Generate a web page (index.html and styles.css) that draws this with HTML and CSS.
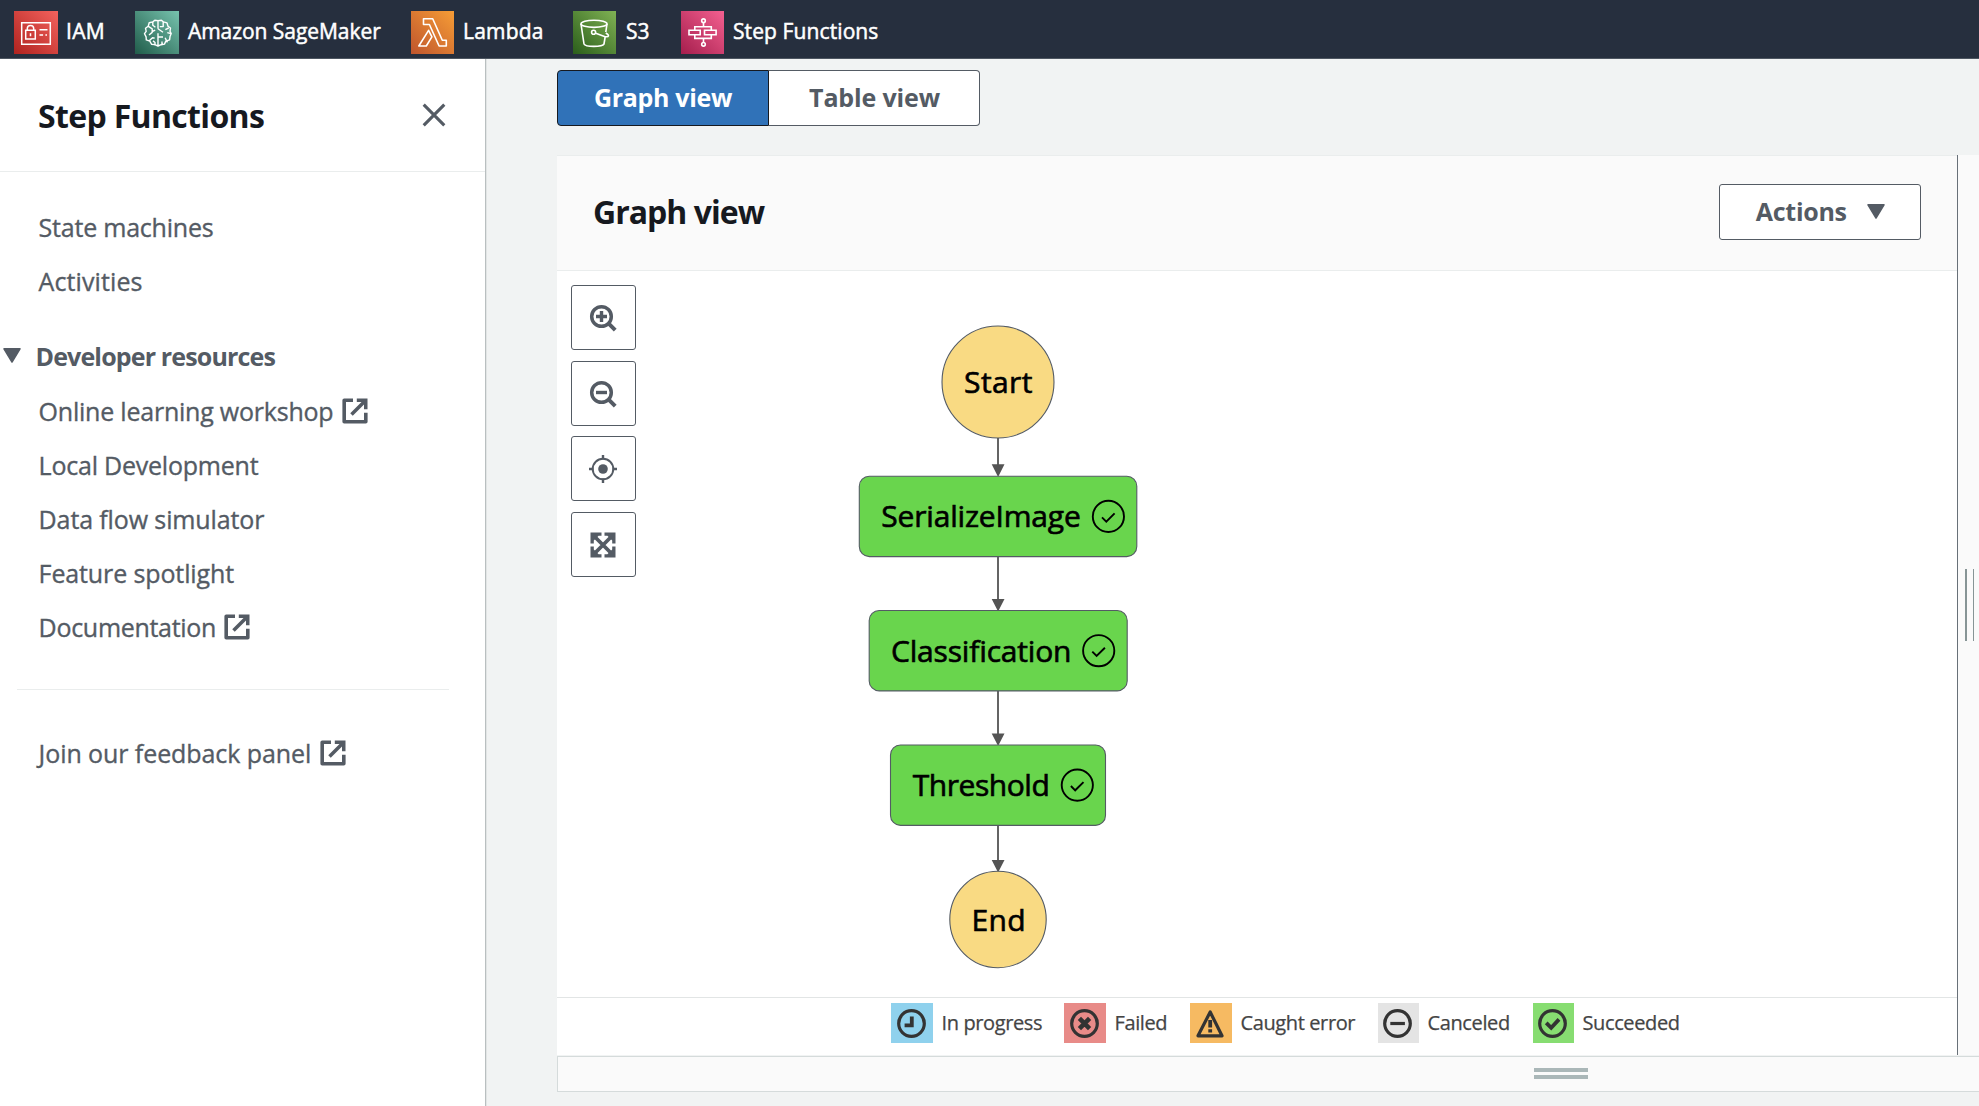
FILE: index.html
```html
<!DOCTYPE html>
<html lang="en">
<head>
<meta charset="utf-8">
<title>Step Functions</title>
<link rel="stylesheet" href="styles.css">
</head>
<body>
<svg width="0" height="0" class="defs" aria-hidden="true">
  <defs>
    <linearGradient id="g-iam" x1="0" y1="1" x2="1" y2="0"><stop offset="0" stop-color="#b0231f"/><stop offset="1" stop-color="#f3625d"/></linearGradient>
    <linearGradient id="g-sage" x1="0" y1="1" x2="1" y2="0"><stop offset="0" stop-color="#205c4a"/><stop offset="1" stop-color="#77c3ae"/></linearGradient>
    <linearGradient id="g-lambda" x1="0" y1="1" x2="1" y2="0"><stop offset="0" stop-color="#bf552d"/><stop offset="1" stop-color="#f69d36"/></linearGradient>
    <linearGradient id="g-s3" x1="0" y1="1" x2="1" y2="0"><stop offset="0" stop-color="#2b5e1b"/><stop offset="1" stop-color="#80b254"/></linearGradient>
    <linearGradient id="g-step" x1="0" y1="1" x2="1" y2="0"><stop offset="0" stop-color="#a51e4d"/><stop offset="1" stop-color="#f46090"/></linearGradient>
    <symbol id="external" viewBox="0 0 26 26">
      <path d="M11 2.2H2.2V23.8H23.8V14.8" fill="none" stroke="currentColor" stroke-width="3.6" stroke-linejoin="round"/>
      <path d="M9.5 16.5 22 4" fill="none" stroke="currentColor" stroke-width="3.6"/>
      <path d="M14.8.5H25.5V11.2H22V4H14.8z" fill="currentColor"/>
    </symbol>
    <symbol id="caret" viewBox="0 0 18 15">
      <path d="M1 .8H17L9 14z" fill="currentColor" stroke="currentColor" stroke-width="1.5" stroke-linejoin="round"/>
    </symbol>
  </defs>
</svg>

<nav class="topbar">
  <a class="service service--iam">
    <svg class="service__icon" viewBox="0 0 44 43"><path fill="url(#g-iam)" d="M0 0h44v43H0z"/><g fill="none" stroke="#fff" stroke-width="1.5"><path d="M7.7 11.7h28.6v21.6H7.7zM11.7 19.3h9.6v8.7h-9.6zM13.3 19v-1.4a3.2 3.2 0 0 1 6.4 0V19M16.5 22.2v3M25.5 18.8h8M25.5 24h3.6M31.4 24h1.6"/></g></svg>
    <span>IAM</span>
  </a>
  <a class="service service--sage">
    <svg class="service__icon" viewBox="0 0 44 43"><path fill="url(#g-sage)" d="M0 0h44v43H0z"/><g fill="none" stroke="#fff" stroke-width="1.4" stroke-linejoin="round"><path d="M23 9.6l-3.2-.3-2 1.6-3.6.8-1 3.5-2.7 2 .7 3.2-1.7 2.3 1.6 3.2.2 3 3.5 1.3 1.7 3 3.3.4 3.2 1.4 3.2-1.3 3.3-.6 1.3-3 3.8-1.3.4-3.2 1.2-3-1.2-2.3.5-3.3-2.5-1.8-1-3.3-3.6-1-2-1.6zM23 9.6v8.2M23 22.3V35M17.8 11v3.2l2.6 2M13 15.2l4.2 2.7v3.5L14 24M17.2 20.5l3-1.3M14.5 29.5l3-2.8 2.2.4M20 34.5v-3l-2-1.6M23 26h5M28.2 11v4.6h-3.4M23 17.8l5 3.5M33.7 17l-3.4 1.6M36 22.6l-3.7-1M32.4 31.4l-2.3-4.6M27 34v-3.4"/></g></svg>
    <span>Amazon SageMaker</span>
  </a>
  <a class="service service--lambda">
    <svg class="service__icon" viewBox="0 0 43 43"><path fill="url(#g-lambda)" d="M0 0h43v43H0z"/><path fill="none" stroke="#fff" stroke-width="1.6" stroke-linejoin="round" d="M12.5 7.7h9.2l9.6 21.6h4V35h-7.2L18.4 13.5h-5.9zM17.6 19.3l3.3 6.6L15.3 35H7.8z"/></svg>
    <span>Lambda</span>
  </a>
  <a class="service service--s3">
    <svg class="service__icon" viewBox="0 0 43 43"><path fill="url(#g-s3)" d="M0 0h43v43H0z"/><g fill="none" stroke="#fff" stroke-width="1.6" stroke-linejoin="round"><ellipse cx="21" cy="12.8" rx="13" ry="3.6"/><path d="M8 13l3 20c1.6 3.2 18 3.2 20 0l1.3-8M34 13l-1.2 8M22 22l9.6 3.4c4.5 1.3 5.2-1.2 1.2-3.4"/><circle cx="20.6" cy="21.3" r="2"/></g></svg>
    <span>S3</span>
  </a>
  <a class="service service--step">
    <svg class="service__icon" viewBox="0 0 43 43"><path fill="url(#g-step)" d="M0 0h43v43H0z"/><g fill="none" stroke="#fff" stroke-width="1.6"><circle cx="22.5" cy="9.7" r="1.8"/><circle cx="22.5" cy="33.3" r="1.8"/><path d="M22.5 11.7v4.2M22.5 27.2v4.2M13.8 19v-3.3h16.5V19M13.8 24v3.4h16.5V24M8 19.2h11.2v4.6H8zM23.5 19.2h11.6v4.6H23.5z"/></g></svg>
    <span>Step Functions</span>
  </a>
</nav>

<div class="page">
  <aside class="sidebar">
    <header class="sidebar__head">
      <h2>Step Functions</h2>
      <svg class="close" viewBox="0 0 24 24"><path d="M1.7 1.7l20.6 20.6M22.3 1.7L1.7 22.3" fill="none" stroke="currentColor" stroke-width="3.1"/></svg>
    </header>
    <ul class="links links--top">
      <li>State machines</li>
      <li class="activities">Activities</li>
    </ul>
    <h3 class="section"><svg class="caret"><use href="#caret"/></svg>Developer resources</h3>
    <ul class="links">
      <li>Online learning workshop<svg class="ext"><use href="#external"/></svg></li>
      <li>Local Development</li>
      <li class="loose">Data flow simulator</li>
      <li class="loose">Feature spotlight</li>
      <li class="docs">Documentation<svg class="ext"><use href="#external"/></svg></li>
    </ul>
    <hr class="divider">
    <ul class="links">
      <li class="feedback">Join our feedback panel<svg class="ext"><use href="#external"/></svg></li>
    </ul>
  </aside>

  <main class="main">
    <div class="tabs">
      <button class="tab tab--active">Graph view</button>
      <button class="tab tab--table">Table view</button>
    </div>

    <div class="split">
      <section class="panel">
        <header class="panel__head">
          <h2>Graph view</h2>
          <button class="actions">Actions<svg class="caret"><use href="#caret"/></svg></button>
        </header>
        <div class="canvas">
          <div class="tools">
            <button class="tool"><svg viewBox="0 0 28 28"><circle cx="12.5" cy="12.5" r="9.8" fill="none" stroke="currentColor" stroke-width="3.5"/><path d="M19.2 19.2l7 7" stroke="currentColor" stroke-width="4"/><path d="M7 12.5h11M12.5 7v11" stroke="currentColor" stroke-width="3.4"/></svg></button>
            <button class="tool"><svg viewBox="0 0 28 28"><circle cx="12.5" cy="12.5" r="9.8" fill="none" stroke="currentColor" stroke-width="3.5"/><path d="M19.2 19.2l7 7" stroke="currentColor" stroke-width="4"/><path d="M7 12.5h11" stroke="currentColor" stroke-width="3.4"/></svg></button>
            <button class="tool"><svg viewBox="0 0 28 28"><circle cx="14" cy="14" r="10.3" fill="none" stroke="currentColor" stroke-width="1.9"/><circle cx="14" cy="14" r="4.8" fill="currentColor"/><path d="M14 0v4.5M14 23.5V28M0 14h4.5M23.5 14H28" stroke="currentColor" stroke-width="2.4"/></svg></button>
            <button class="tool"><svg viewBox="0 0 28 28"><path d="M4 4l20 20M24 4L4 24" stroke="currentColor" stroke-width="3.8"/><path d="M1.5 1.5h11v3.3H9.6L4.8 9.6v2.9H1.5zM26.5 1.5v11h-3.3V9.6l-4.8-4.8h-2.9V1.5zM26.5 26.5h-11v-3.3h2.9l4.8-4.8v-2.9h3.3zM1.5 26.5v-11h3.3v2.9l4.8 4.8h2.9v3.3z" fill="currentColor"/></svg></button>
          </div>
          <svg class="graph" viewBox="840 271 316 726">
            <g class="edge">
              <path d="M998 438v30M998 557v46M998 691v46M998 825v38"/>
              <path class="arrow" d="M991.7 464.2h12.8L998.1 477zM991.7 599h12.8l-6.4 12.6zM991.7 733.5h12.8l-6.4 12.6zM991.7 860h12.8l-6.4 12.6z"/>
            </g>
            <g class="terminal">
              <circle cx="998" cy="382" r="56"/>
              <circle cx="998" cy="919.5" r="48.2"/>
            </g>
            <g class="state">
              <rect x="859.3" y="476.2" width="277.5" height="80.4" rx="10"/>
              <rect x="869.2" y="610.5" width="258" height="80.4" rx="10"/>
              <rect x="890.5" y="745" width="215" height="80.4" rx="10"/>
            </g>
            <g class="check">
              <circle cx="1108.4" cy="516.4" r="15.6"/><path d="M1102 517.3l4.3 4.3 8.3-8.2"/>
              <circle cx="1098.7" cy="650.7" r="15.6"/><path d="M1092.3 651.6l4.3 4.3 8.3-8.2"/>
              <circle cx="1077.3" cy="785.1" r="15.6"/><path d="M1070.9 786l4.3 4.3 8.3-8.2"/>
            </g>
            <g class="label">
              <text x="964" y="393" textLength="68.5">Start</text>
              <text x="881.3" y="527.2" textLength="199.5">SerializeImage</text>
              <text x="891" y="661.7" textLength="180.5">Classification</text>
              <text x="912.8" y="796" textLength="137">Threshold</text>
              <text x="971.5" y="931" textLength="54">End</text>
            </g>
          </svg>
        </div>
        <footer class="legend">
          <span class="key key--progress"><svg viewBox="0 0 42 40"><circle cx="20.5" cy="20.5" r="12.8"/><path class="mid" d="M20.8 13.5v8.8h-7.2"/></svg><span>In progress</span></span>
          <span class="key key--failed"><svg viewBox="0 0 42 40"><circle cx="20.5" cy="20.5" r="12.8"/><path class="thick" d="M15.4 15.4l10.2 10.2M25.6 15.4L15.4 25.6"/></svg><span>Failed</span></span>
          <span class="key key--caught"><svg viewBox="0 0 42 40"><path d="M20.2 9L32 32.8H8z" stroke-linejoin="round"/><path class="mid" d="M20.2 17v7.5M20.2 26.3v3.2"/></svg><span>Caught error</span></span>
          <span class="key key--canceled"><svg viewBox="0 0 41 40"><circle cx="19.5" cy="20.5" r="12.8"/><path d="M12.3 20.5h14.6"/></svg><span>Canceled</span></span>
          <span class="key key--succeeded"><svg viewBox="0 0 41 40"><circle cx="19.5" cy="20.5" r="12.8"/><path class="mid" d="M13.2 19.8l5 5 7.8-8.4"/></svg><span>Succeeded</span></span>
        </footer>
      </section>
      <div class="resizer-v"><i></i><i></i></div>
    </div>
    <div class="resizer-h"><div class="grip"><i></i><i></i></div></div>
  </main>
</div>
</body>
</html>
```
FILE: styles.css
```css
* { box-sizing: border-box; }
body {
  margin: 0;
  height: 1106px;
  overflow: hidden;
  display: flex;
  flex-direction: column;
  background: #f1f3f3;
  color: #545b64;
  font-family: "Open Sans", "Noto Sans", sans-serif;
}
.defs { position: absolute; }
h2, h3, ul { margin: 0; padding: 0; }
ul { list-style: none; }
button { font-family: inherit; color: inherit; padding: 0; margin: 0; }

/* Service shortcuts */
.topbar {
  height: 59px;
  flex: none;
  display: flex;
  align-items: flex-start;
  padding: 11px 0 0 14px;
  background: #262f3e;
  border-bottom: 1px solid #4d5661;
  color: #fff;
  font-size: 21px;
  line-height: 40px;
  -webkit-text-stroke: 0.5px;
}
.service { display: flex; gap: 8px; white-space: nowrap; }
.service__icon { height: 43px; width: 43px; flex: none; }
.service--iam .service__icon, .service--sage .service__icon { width: 44px; }
.service--iam { width: 121px; letter-spacing: 0.3px; }
.service--sage { width: 276px; gap: 9px; letter-spacing: -0.05px; }
.service--lambda { width: 162px; gap: 9px; letter-spacing: 0.2px; }
.service--s3 { width: 108px; gap: 10px; }
.service--step { letter-spacing: 0.1px; gap: 9px; }

.page { flex: 1; display: flex; min-height: 0; }

/* Navigation */
.sidebar {
  width: 487px;
  flex: none;
  background: #fff;
  border-right: 1px solid #e2e5e5;
  box-shadow: inset -1px 0 #b9bfc0;
  font-size: 25px;
  letter-spacing: -0.22px;
  -webkit-text-stroke: 0.35px;
}
.sidebar__head {
  height: 113px;
  width: 485px;
  padding: 0 39px 0 38px;
  display: flex;
  align-items: center;
  justify-content: space-between;
  border-bottom: 1px solid #eaeded;
}
h2 {
  font-size: 32px;
  line-height: 40px;
  font-weight: 700;
  letter-spacing: -0.66px;
  color: #16191f;
  -webkit-text-stroke: 0;
}
.sidebar__head h2 { margin-top: 1px; }
.close { width: 24px; height: 24px; margin-top: -1px; }
.links li {
  height: 54px;
  padding-left: 38.6px;
  line-height: 54px;
  display: flex;
  align-items: center;
}
.links--top { padding-top: 28px; }
.links .activities { letter-spacing: 0.1px; }
.links .loose { letter-spacing: -0.12px; }
.links .docs { letter-spacing: -0.3px; }
.ext { width: 26px; height: 26px; margin: 0 0 0 9px; }
.docs .ext { margin-left: 8px; }
.caret { width: 18px; height: 15px; flex: none; }
.section {
  height: 54px;
  margin-top: 21px;
  padding-left: 3px;
  display: flex;
  align-items: center;
  font-size: 25px;
  font-weight: 700;
  letter-spacing: -0.85px;
  -webkit-text-stroke: 0;
}
.section .caret { margin-right: 14.5px; margin-top: -1px; }
.links--top + .section + .links { margin-top: 1px; }
.divider { width: 432px; height: 1px; border: 0; margin: 35px 0 0 17px; background: #eaeded; }
.links .feedback { margin-top: 36px; letter-spacing: -0.08px; }

/* Execution detail */
.main { flex: 1; min-width: 0; padding: 11px 0 0 70px; }
.tabs { display: flex; width: 423px; height: 56px; }
.tab {
  width: 212px;
  border: 1px solid #545b64;
  border-left: 0;
  border-radius: 0 4px 4px 0;
  background: #fff;
  font-size: 25px;
  line-height: 51px;
  padding-bottom: 2px;
  font-weight: 700;
}
.tab--active {
  border: 1px solid #16191f;
  border-radius: 4px 0 0 4px;
  background: #3072b8;
  color: #fff;
  letter-spacing: -0.32px;
}
.tab--table { width: 211px; letter-spacing: -0.15px; padding-left: 1px; }

.split { display: flex; height: 900px; margin-top: 29px; }
.panel { width: 1400px; display: flex; flex-direction: column; background: #fff; }
.panel__head {
  height: 116px;
  padding: 0 36px 1px;
  display: flex;
  align-items: center;
  justify-content: space-between;
  background: #fafafa;
  border-top: 1px solid #eaeded;
  border-bottom: 1px solid #eaeded;
}
.panel__head h2 { letter-spacing: -0.98px; margin-top: -2px; }
.actions {
  width: 202px;
  height: 56px;
  margin-top: -2px;
  display: flex;
  align-items: center;
  justify-content: center;
  gap: 20.5px;
  padding: 0 0 1px 1px;
  border: 1px solid #545b64;
  border-radius: 3px;
  background: #fff;
  font-size: 25px;
  font-weight: 700;
  letter-spacing: -0.28px;
}
.actions .caret { margin-top: 1px; }
.canvas { flex: 1; display: flex; min-height: 0; padding-left: 14px; }
.tools { width: 65px; padding-top: 14px; display: flex; flex-direction: column; gap: 10.6px; }
.tool {
  width: 65px;
  height: 65px;
  display: grid;
  place-items: center;
  padding: 1px 1px 0 0;
  border: 1px solid #545b64;
  border-radius: 3px;
  background: #fff;
}
.tool svg { width: 28px; height: 28px; }
.graph { width: 316px; height: 726px; margin-left: 204px; }
.edge path { fill: none; stroke: #545454; stroke-width: 1.8; }
.edge .arrow { fill: #545454; stroke: none; }
.terminal circle { fill: #f9da83; stroke: #545b64; stroke-width: 1.1; }
.state rect { fill: #69d54d; stroke: #545b64; stroke-width: 1.1; }
.check { fill: none; stroke: #000; stroke-width: 1.9; }
.label { font-size: 30px; fill: #000; stroke: #000; stroke-width: 0.65px; }

.legend {
  height: 58px;
  padding: 5px 0 0 334px;
  display: flex;
  border-top: 1px solid #e2e5e5;
  color: #444;
  font-size: 20px;
  line-height: 39px;
  letter-spacing: -0.38px;
  white-space: nowrap;
  -webkit-text-stroke: 0.25px;
}
.key { display: flex; gap: 8.5px; }
.key svg { width: 42px; height: 40px; flex: none; fill: none; stroke: #333; stroke-width: 3.2; }
.key .mid { stroke-width: 3.8; }
.key .thick { stroke-width: 4.6; }
.key--progress { width: 173px; }
.key--progress svg { background: #8fd1ed; }
.key--failed { width: 126px; }
.key--failed svg { background: #e88b88; }
.key--caught { width: 188px; }
.key--caught svg { background: #f6ba62; }
.key--canceled { width: 155px; }
.key--canceled svg, .key--succeeded svg { width: 41px; }
.key--canceled svg { background: #e4e4e4; }
.key--succeeded svg { background: #87dd71; }

/* Drag handles */
.resizer-v {
  flex: 1;
  display: flex;
  align-items: flex-start;
  gap: 6px;
  padding: 414px 0 0 7px;
  background: #fafafa;
  border-left: 1px solid #687078;
}
.resizer-v i { width: 2px; height: 72px; background: #879596; }
.resizer-v i + i { width: 1px; }
.resizer-h {
  height: 36px;
  margin-top: 1px;
  padding: 11px 0 0 976px;
  background: #fafafa;
  border: 1px solid #d5dbdb;
  border-right: 0;
}
.grip { width: 54px; display: grid; gap: 3px; }
.grip i { height: 4px; background: #aab7b8; }
```
